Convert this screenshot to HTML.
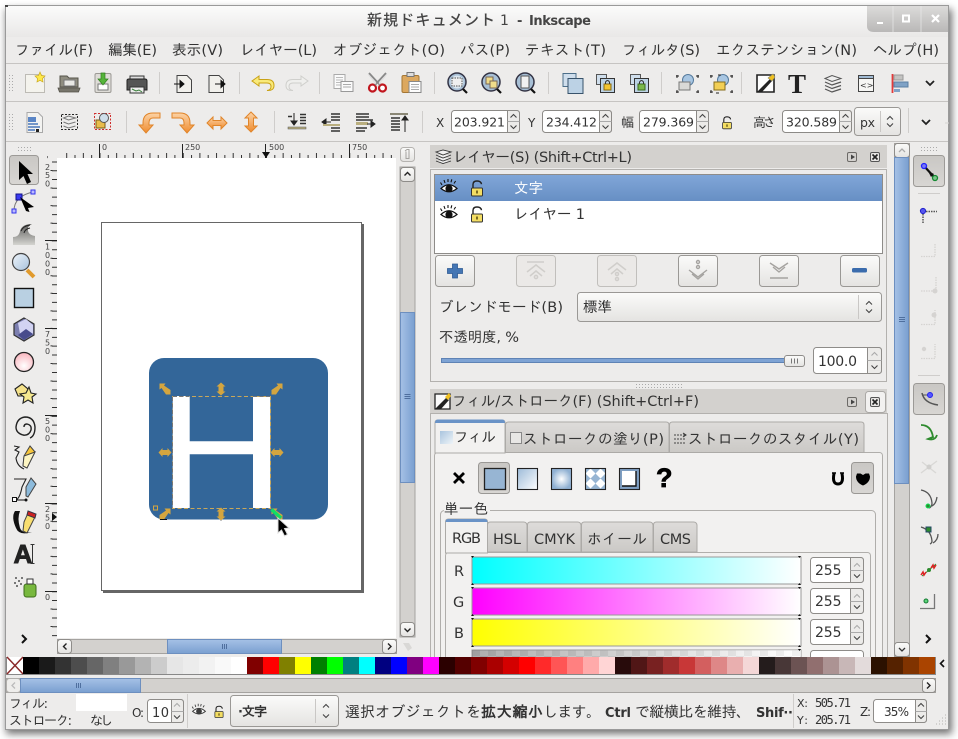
<!DOCTYPE html>
<html lang="ja"><head><meta charset="utf-8"><title>新規ドキュメント 1 - Inkscape</title>
<style>
html,body{margin:0;padding:0;background:#fff;width:958px;height:739px;overflow:hidden}
svg{display:block;position:absolute;left:0;top:0}
text{font-family:"DejaVu Sans","IPAGothic","Noto Sans CJK JP",sans-serif;font-size:14.5px;fill:#333}
.b{font-weight:700}
.s{font-size:8px;fill:#444;font-family:"DejaVu Sans",sans-serif}
.m{font-family:"DejaVu Sans Mono",monospace;font-size:12px}
</style></head><body>
<svg width="958" height="739" viewBox="0 0 958 739" xmlns="http://www.w3.org/2000/svg">
<defs>
<filter id="bl" x="-5%" y="-5%" width="110%" height="110%"><feGaussianBlur stdDeviation="4"/></filter>
<linearGradient id="title" x1="0" y1="0" x2="0" y2="1"><stop offset="0" stop-color="#fbfbfb"/><stop offset="1" stop-color="#e9e8e7"/></linearGradient>
<linearGradient id="ctl" x1="0" y1="0" x2="0" y2="1"><stop offset="0" stop-color="#dcdbda"/><stop offset="1" stop-color="#b9b8b7"/></linearGradient>
<linearGradient id="btn" x1="0" y1="0" x2="0" y2="1"><stop offset="0" stop-color="#fbfbfa"/><stop offset="1" stop-color="#e4e3e1"/></linearGradient>
<linearGradient id="tog" x1="0" y1="0" x2="0" y2="1"><stop offset="0" stop-color="#c9c7c4"/><stop offset="1" stop-color="#d8d6d3"/></linearGradient>
<linearGradient id="thv" x1="0" y1="0" x2="1" y2="0"><stop offset="0" stop-color="#a5c1e6"/><stop offset="1" stop-color="#7a9fd0"/></linearGradient>
<linearGradient id="thh" x1="0" y1="0" x2="0" y2="1"><stop offset="0" stop-color="#a5c1e6"/><stop offset="1" stop-color="#7a9fd0"/></linearGradient>
<linearGradient id="sel" x1="0" y1="0" x2="0" y2="1"><stop offset="0" stop-color="#80a6d8"/><stop offset="1" stop-color="#678fc4"/></linearGradient>
<linearGradient id="tab" x1="0" y1="0" x2="0" y2="1"><stop offset="0" stop-color="#dedcda"/><stop offset="1" stop-color="#cbc9c6"/></linearGradient>
<linearGradient id="rr" x1="0" y1="0" x2="1" y2="0"><stop offset="0" stop-color="#0ff"/><stop offset="1" stop-color="#fff"/></linearGradient>
<linearGradient id="gg" x1="0" y1="0" x2="1" y2="0"><stop offset="0" stop-color="#f0f"/><stop offset="1" stop-color="#fff"/></linearGradient>
<linearGradient id="yy" x1="0" y1="0" x2="1" y2="0"><stop offset="0" stop-color="#ff0"/><stop offset="1" stop-color="#fff"/></linearGradient>
<linearGradient id="aa" x1="0" y1="0" x2="1" y2="0"><stop offset="0" stop-color="#777"/><stop offset="1" stop-color="#fff"/></linearGradient>
<linearGradient id="blu" x1="0" y1="0" x2="1" y2="1"><stop offset="0" stop-color="#a9c4de"/><stop offset="1" stop-color="#eef4f8"/></linearGradient>
<linearGradient id="li" x1="0" y1="0" x2="1" y2="1"><stop offset="0" stop-color="#9dbbd8"/><stop offset="1" stop-color="#fff"/></linearGradient>
<radialGradient id="ra"><stop offset="0" stop-color="#fff"/><stop offset="1" stop-color="#8fb0d2"/></radialGradient>
<radialGradient id="pk" cx=".5" cy=".7" r=".7"><stop offset="0" stop-color="#fff"/><stop offset="1" stop-color="#f9b4bd"/></radialGradient>
<linearGradient id="ora" x1="0" y1="0" x2="0" y2="1"><stop offset="0" stop-color="#fcd3a6"/><stop offset="1" stop-color="#ef8c30"/></linearGradient>
<linearGradient id="lens" x1="0" y1="0" x2="1" y2="1"><stop offset="0" stop-color="#eef4fa"/><stop offset="1" stop-color="#a8c2dc"/></linearGradient>
<linearGradient id="tw" x1="0" y1="0" x2="0" y2="1"><stop offset="0" stop-color="#5c5c5a"/><stop offset="1" stop-color="#d4d4d0"/></linearGradient>
<g id="h"><polygon points="0,-6.500 4.500,-2.500 2.500,-2.500 2.500,2.500 4.500,2.500 0,6.500 -4.500,2.500 -2.500,2.500 -2.500,-2.500 -4.500,-2.500" fill="#d4a53f"/></g>
<g id="d"><polygon points="-5.500,-5.500 0.500,-5.500 -1,-3.500 5.500,1 5.500,5.500 1,5.500 -3.500,-1 -5.500,0.500" fill="#d4a53f"/></g>
<g id="eye"><path d="M-8 0.5Q0-7 8 0.5Q0 7-8 0.5Z" fill="#fff" stroke="#111" stroke-width="1.2"/><circle cy="0.5" r="3.6" fill="#111"/><path d="M-7-3l-1.5-2.5M-4-5l-1-3M-1-6V-9M2-5.7l.8-3M5-4.5l1.6-2.5" stroke="#111" stroke-width="1.1"/></g>
<g id="lock"><path d="M-4-2V-5.5Q-4-9 0-9Q4-9 4.5-5.8" fill="none" stroke="#222" stroke-width="1.4"/><rect x="-5.5" y="-2" width="11" height="8" rx="1" fill="#f3dd63" stroke="#333"/><rect x="-1" y="0.5" width="2" height="3" fill="#7a6a20"/></g>
<g id="upc"><path d="M-3 1.5L0-1.5 3 1.5" fill="none" stroke="#444" stroke-width="1.1"/></g>
<g id="dnc"><path d="M-3-1.5L0 1.5 3-1.5" fill="none" stroke="#444" stroke-width="1.1"/></g>
<g id="upf"><path d="M-3 1.5L0-1.5 3 1.5" fill="none" stroke="#aaa" stroke-width="1.1"/></g>
<pattern id="chk" width="16" height="16" patternUnits="userSpaceOnUse"><rect width="16" height="16" fill="#fff"/><rect width="8" height="8" fill="#0002"/><rect x="8" y="8" width="8" height="8" fill="#0002"/></pattern>
<pattern id="pat" x="585.500" y="468.500" width="10" height="10" patternUnits="userSpaceOnUse"><rect width="10" height="10" fill="#97b5d3"/><path d="M5 1L9 5 5 9 1 5Z" fill="#fff" stroke="#fff" stroke-width="1.500" stroke-linejoin="round"/></pattern>
<pattern id="dots" width="3" height="3" patternUnits="userSpaceOnUse"><rect width="1" height="1" fill="#aaa"/></pattern>
</defs>

<!-- window -->
<rect x="6" y="9" width="946" height="725" fill="#000" opacity=".55" filter="url(#bl)"/>
<rect x="5.5" y="5.5" width="943" height="724" fill="#edeceb" stroke="#9a9a9a"/>
<rect x="6" y="6" width="942" height="31" fill="url(#title)"/>
<rect x="5" y="5" width="3" height="2" fill="#444"/>
<path d="M867 6H948V32H874Q867 32 867 26Z" fill="url(#ctl)"/>
<path d="M893 6V32M921 6V32" stroke="#eaeaea" stroke-opacity=".7"/>
<rect x="877" y="22" width="6" height="2" fill="#fff"/>
<rect x="903" y="15.500" width="6" height="6" fill="none" stroke="#fff" stroke-width="2"/>
<path d="M932 15l7 7M939 15l-7 7" stroke="#fff" stroke-width="2.200"/>
<text x="367" y="25" style="fill:#444;font-family:'Noto Sans CJK JP',sans-serif;font-weight:500;font-size:15px" textLength="128">新規ドキュメント</text>
<text x="500" y="25" style="fill:#444;font-size:14px;font-weight:500" textLength="9">1</text>
<text x="517" y="25" class="b" style="fill:#444;font-size:13px">-</text>
<text x="529" y="25" class="b" style="fill:#444;font-size:13px" textLength="62">Inkscape</text>

<!-- menu -->
<g>
<text x="15" y="55" textLength="78">ファイル(F)</text>
<text x="108" y="55" textLength="49">編集(E)</text>
<text x="172" y="55" textLength="51">表示(V)</text>
<text x="240" y="55" textLength="77">レイヤー(L)</text>
<text x="333" y="55" textLength="112">オブジェクト(O)</text>
<text x="460" y="55" textLength="50">パス(P)</text>
<text x="525" y="55" textLength="81">テキスト(T)</text>
<text x="622" y="55" textLength="78">フィルタ(S)</text>
<text x="716" y="55" textLength="141">エクステンション(N)</text>
<text x="873" y="55" textLength="66">ヘルプ(H)</text>
</g>
<path d="M6 63.500H948M6 101.500H948M6 141.500H948" stroke="#c6c4c2"/>
<rect x="9" y="75" width="6" height="17" fill="url(#dots)"/>
<rect x="9" y="113" width="6" height="17" fill="url(#dots)"/>

<!-- toolbar seps -->
<path d="M159.500 72V94M239.500 72V94M319.500 72V94M434.500 72V94M548.500 72V94M661.500 72V94M741.500 72V94M126.500 111V133M274.500 111V133M422.500 111V133M908.500 108V133" stroke="#cfcdcb"/>

<!-- toolbar 1 icons -->
<path d="M25.500 74.500H41L44.500 78V92.500H25.500Z" fill="#f4f3ed" stroke="#bdbbb5"/>
<polygon points="40,72 41.500,75.500 45,76 42.500,78.500 43,82 40,80.300 37,82 37.500,78.500 35,76 38.500,75.500" fill="#ffe94a" stroke="#c9a91f" stroke-width=".7"/>

<path d="M60 76h7l2 2h9v9H60Z" fill="#8f8d80" stroke="#55534a"/><rect x="64" y="80" width="11" height="6" fill="#e8e8e4" stroke="#777"/><path d="M58 88h22l-1.500 4H59.500Z" fill="#77756b" stroke="#55534a" stroke-width=".8"/>

<rect x="95" y="73.500" width="16" height="19" rx="1.500" fill="#dedcd7" stroke="#9b9994"/><rect x="98" y="84" width="10" height="6" fill="#fff" stroke="#777"/><path d="M101 73h4v6h3l-5 6-5-6h3Z" fill="#55b43a" stroke="#2f7f1e" stroke-width=".7"/>

<path d="M130 76h14v5h-14Z" fill="#ddd" stroke="#333"/><path d="M127 80.500Q127 79 129 79H145Q147 79 147 81V90H127Z" fill="#555" stroke="#222"/><rect x="130" y="87" width="14" height="6" fill="#eee" stroke="#333"/><path d="M132 89l4 2 3-1 3 2" stroke="#3a7f3a" fill="none"/>

<path d="M177 75.500H187L191.500 80V92.500H177Z" fill="#f1f0ec" stroke="#444"/><path d="M174 84H183M180 80.500L184 84 180 87.500Z" stroke="#111" fill="#111"/>
<path d="M209 75.500H219L223.500 80V92.500H209Z" fill="#f1f0ec" stroke="#444"/><path d="M215 84H224M221 80.500L225 84 221 87.500Z" stroke="#111" fill="#111"/>

<path d="M259 76L252 81 259 86V83H267Q271 83 271 86.500Q271 90 267 90.500Q274 91 274 85.500Q274 79.500 267 79.500H259Z" fill="#f9ea7a" stroke="#c9a216"/>
<path d="M301 76L308 81 301 86V83H293Q289 83 289 86.500Q289 90 293 90.500Q286 91 286 85.500Q286 79.500 293 79.500H301Z" fill="#efefed" stroke="#cfcfcc"/>

<rect x="334" y="74.500" width="11" height="14" fill="#fafafa" stroke="#aaa"/><path d="M336 77.500h7M336 80h7M336 82.500h7M336 85h7" stroke="#bbb"/><rect x="341" y="81.500" width="12" height="10" fill="#fafafa" stroke="#999"/><path d="M343 84.500h8M343 87h8" stroke="#aaa"/>

<circle cx="372.500" cy="88" r="3.500" fill="#fff" stroke="#c1161e" stroke-width="2.200"/><circle cx="382.500" cy="88" r="3.500" fill="#fff" stroke="#c1161e" stroke-width="2.200"/><path d="M375 85L386 73M380 85L369 73" stroke="#888" stroke-width="1.800"/><path d="M376 84L368 74M379 84L387 74" stroke="#ddd"/>

<rect x="402" y="75.500" width="17" height="17" rx="1.500" fill="#dca85f" stroke="#a47633"/><rect x="407" y="72.500" width="7" height="4" fill="#ddd" stroke="#777"/><rect x="409" y="81.500" width="12" height="11" fill="#fdfdfd" stroke="#888"/><path d="M411 84.500h8M411 87h8M411 89.500h8" stroke="#aaa"/>

<circle cx="457" cy="82" r="9" fill="#a8c0d6" stroke="#334" stroke-width="1.500"/><circle cx="457" cy="82" r="6.500" fill="#dde7ef"/><path d="M463 89l4 4" stroke="#111" stroke-width="2.200"/><rect x="452" y="78" width="10" height="8" fill="#f0f0f0" stroke="#555" stroke-dasharray="1.500 1"/>
<circle cx="491" cy="82" r="9" fill="#a8c0d6" stroke="#334" stroke-width="1.500"/><path d="M497 89l4 4" stroke="#111" stroke-width="2.200"/><rect x="486" y="77" width="7" height="7" fill="#f0dc8a" stroke="#765"/><rect x="490" y="81" width="7" height="7" fill="#f0dc8a" stroke="#765"/>
<circle cx="525" cy="82" r="9" fill="#a8c0d6" stroke="#334" stroke-width="1.500"/><path d="M531 89l4 4" stroke="#111" stroke-width="2.200"/><rect x="521" y="76" width="8" height="12" fill="#f1f1f1" stroke="#555"/>

<rect x="563" y="73.500" width="13" height="13" fill="#cfdeec" stroke="#4d6f8a"/><rect x="568" y="78.500" width="15" height="15" fill="#bcd2e5" stroke="#38536b"/>
<rect x="596.500" y="74.500" width="10" height="10" fill="#cfdeec" stroke="#555"/><rect x="600.500" y="78.500" width="14" height="14" fill="#bcd2e5" stroke="#333"/><rect x="604" y="84" width="7" height="6" fill="#f3c531" stroke="#8a6a10"/><path d="M605.500 84v-2q2-3 4 0v2" fill="none" stroke="#333"/>
<rect x="630.500" y="74.500" width="10" height="10" fill="#cfdeec" stroke="#555"/><rect x="634.500" y="78.500" width="14" height="14" fill="#bcd2e5" stroke="#333"/><rect x="638" y="84" width="7" height="6" fill="#7cb84c" stroke="#3a6b1c"/><path d="M639.500 84v-2q2-3 4 0v2" fill="none" stroke="#333"/>

<circle cx="688" cy="80" r="5.500" fill="#a8c6e2" stroke="#557a9c"/><rect x="679" y="82" width="11" height="8" fill="#d9d9d6" stroke="#777"/><path d="M676 76h3M696 76h3M676 92h3M696 92h3M677 75v3M698 75v3M677 90v3M698 90v3" stroke="#222"/>
<circle cx="723" cy="80" r="5.500" fill="#a8c6e2" stroke="#557a9c"/><rect x="714" y="82" width="11" height="8" fill="#f2cf55" stroke="#866d1a"/><path d="M710 76h3M730 76h3M710 92h3M730 92h3M711 75v3M732 75v3M711 90v3M732 90v3M718 75h3M716 93h3" stroke="#222"/>

<path d="M757 75h17v17h-17Z" fill="#fdfdfd" stroke="#222" stroke-width="1.600"/><path d="M757 92L770 79 772 81 762 92Z" fill="#222"/><path d="M768 78l5-4 2 3-3 4Z" fill="#f0c020" stroke="#886" stroke-width=".6"/>
<text x="788" y="93" style="font-family:'Liberation Serif',serif;font-size:27px;font-weight:700;fill:#222" textLength="22">T</text>
<path d="M825 78.500L832 75.500 841 78.500 832 81.500Z" fill="#eee" stroke="#555"/><path d="M825 82l7 3 9-3M825 85.500l7 3 9-3M825 89l7 3 9-3" fill="none" stroke="#555" stroke-width="1.200"/>
<rect x="858.500" y="75.500" width="15" height="16" fill="#f6f6f4" stroke="#444"/><rect x="858.500" y="75.500" width="15" height="3" fill="#9fb9d2" stroke="#444"/><text x="860" y="88" style="font-size:8px;fill:#333">&lt;&gt;</text>
<path d="M892.500 74V93" stroke="#e23b3b" stroke-width="1.800"/><rect x="894" y="75" width="9" height="5" fill="#c3c3c1" stroke="#999"/><rect x="894" y="82" width="14" height="5" fill="#7fa2c6" stroke="#5a7fa3"/><rect x="894" y="89" width="6" height="3" fill="#7fa2c6"/>
<path d="M926 81l4 4 4-4" fill="none" stroke="#222" stroke-width="1.800"/>

<!-- toolbar 2 icons -->
<path d="M27 112.500H38L42.500 117V132.500H27Z" fill="#f3f3f1" stroke="#a9a9a9"/><rect x="28" y="117" width="8" height="5" fill="#5b86c6"/><path d="M28 124h10M28 127h12M28 130h7" stroke="#4b77bb" stroke-width="1.500"/><path d="M36 129h3v3h-3" fill="#222"/>
<rect x="61.500" y="114.500" width="16" height="15" fill="none" stroke="#222" stroke-dasharray="2 1.500"/><path d="M63.500 118l5-2 7 2-7 2ZM63.500 122l5 2 7-2M63.500 126l5 2 7-2" fill="#eee" stroke="#777"/>
<rect x="94.500" y="113.500" width="16" height="16" fill="none" stroke="#cf2b2b" stroke-dasharray="2 1.500"/><rect x="96" y="120" width="9" height="8" fill="#e8bc4b" stroke="#7a5d14"/><circle cx="104" cy="118" r="4.500" fill="#cfdfeb" stroke="#555"/>

<path d="M160 113H153Q143 113 143 123V125H139L146 133 153 125H149V123Q149 118 153 118H160Z" fill="url(#ora)" stroke="#e0852a"/>
<path d="M172 113H180Q190 113 190 123V125H194L187 133 180 125H184V123Q184 118 180 118H172Z" fill="url(#ora)" stroke="#e0852a"/>
<polygon points="207,123 213,117 213,120.500 221,120.500 221,117 227,123 221,129 221,125.500 213,125.500 213,129" fill="url(#ora)" stroke="#e0852a"/>
<polygon points="251,112 257,118 253.500,118 253.500,126 257,126 251,132 245,126 248.500,126 248.500,118 245,118" fill="url(#ora)" stroke="#e0852a"/>

<path d="M288 116.500H292M300 114.500H306M300 117.500H306M300 120.500H306M300 123.500H306" stroke="#333" stroke-width="1.500"/><path d="M294 113V124M291 121L294 125 297 121Z" stroke="#222" fill="#222"/><rect x="288" y="127" width="18" height="2" fill="#b9ae7e" stroke="#555" stroke-width=".5"/>
<path d="M331 114h9M331 117h9M331 120h9M331 128h9M331 131h9" stroke="#333" stroke-width="1.500"/><path d="M323 122h8M326 119l-4 3 4 3Z" fill="#222" stroke="#222"/><rect x="323" y="124" width="17" height="2" fill="#b9ae7e"/>
<path d="M356 114h13M356 117h13M356 120h17M356 128h11M356 131h9" stroke="#333" stroke-width="1.500"/><rect x="356" y="122" width="12" height="3" fill="#b9ae7e"/><path d="M367 124h7M371 121l4 3-4 3Z" fill="#222" stroke="#222"/>
<rect x="390" y="113" width="18" height="2" fill="#8b8876"/><path d="M391 118h9M391 121h9M391 124h9M391 127h9M391 130h9" stroke="#333" stroke-width="1.500"/><path d="M405 132V118M402 120l3-4 3 4Z" fill="#222" stroke="#222"/>

<!-- toolbar 2 spins -->
<text x="436" y="127" style="font-size:12px" textLength="9">X</text>
<text x="528" y="127" style="font-size:12px" textLength="9">Y</text>
<text x="621" y="127" style="font-size:13px" textLength="13">幅</text>
<text x="753" y="127" style="font-size:13px" textLength="23">高さ</text>
<use href="#lock" transform="translate(727,124) scale(.8)"/>
<g fill="#fff" stroke="#8c8a87">
<rect x="451.500" y="110.500" width="68" height="22" rx="3"/><rect x="542.500" y="110.500" width="69" height="22" rx="3"/><rect x="639.500" y="110.500" width="69" height="22" rx="3"/><rect x="782.500" y="110.500" width="69" height="22" rx="3"/>
</g>
<g fill="#ecebe9" stroke="#8c8a87">
<path d="M507.500 110.500h9q3 0 3 3v16q0 3-3 3h-9Z"/><path d="M599.500 110.500h9q3 0 3 3v16q0 3-3 3h-9Z"/><path d="M696.500 110.500h9q3 0 3 3v16q0 3-3 3h-9Z"/><path d="M839.500 110.500h9q3 0 3 3v16q0 3-3 3h-9Z"/>
</g>
<path d="M507.500 121.500h12M599.500 121.500h12M696.500 121.500h12M839.500 121.500h12" stroke="#aaa"/>
<use href="#upc" x="513.500" y="116"/><use href="#dnc" x="513.500" y="127"/><use href="#upc" x="605.500" y="116"/><use href="#dnc" x="605.500" y="127"/><use href="#upc" x="702.500" y="116"/><use href="#dnc" x="702.500" y="127"/><use href="#upc" x="845.500" y="116"/><use href="#dnc" x="845.500" y="127"/>
<text x="454" y="126.500" textLength="51" style="font-size:12.500px">203.921</text>
<text x="546" y="126.500" textLength="51" style="font-size:12.500px">234.412</text>
<text x="643" y="126.500" textLength="51" style="font-size:12.500px">279.369</text>
<text x="786" y="126.500" textLength="51" style="font-size:12.500px">320.589</text>
<rect x="854.500" y="107.500" width="46" height="28" rx="3" fill="url(#btn)" stroke="#9a9895"/>
<text x="860" y="127" style="font-size:12.500px" textLength="15">px</text><path d="M880.500 111V132" stroke="#c9c7c5"/>
<use href="#upc" x="890" y="118"/><use href="#dnc" x="890" y="125"/>
<path d="M922 120l4 4 4-4" fill="none" stroke="#222" stroke-width="1.800"/>
<path d="M945 123h4" stroke="#d5d3d1"/>

<!-- left toolbox -->
<rect x="17" y="145" width="16" height="6" fill="url(#dots)"/>
<rect x="9.500" y="155.500" width="29" height="29" rx="3" fill="url(#tog)" stroke="#9c9a97"/>
<path d="M19 161V180L23.500 176 27 184 31 182 27.500 174 33 174Z" fill="#000"/>
<path d="M14 211Q14 196 33 192" fill="none" stroke="#777"/>
<rect x="16" y="194" width="6" height="6" fill="#3a3af0" stroke="#118"/><rect x="31" y="190" width="4" height="4" fill="#bcbcff" stroke="#33e"/><rect x="12" y="209" width="4" height="4" fill="#bcbcff" stroke="#33e"/>
<path d="M20 197L34 207 28 208 29.500 212 26 211Z" fill="#000"/>
<path d="M13 245V237Q19 237 20 231Q22 224 32 224Q27 226 28 231Q29 235 35 236V245Z" fill="url(#tw)"/><path d="M21 231Q23 226 30 225M24 233Q25 229 30 228" stroke="#222" fill="none"/>
<path d="M27 270L34 277" stroke="#e19a2d" stroke-width="4"/><circle cx="21" cy="262" r="8.500" fill="url(#lens)" stroke="#444" stroke-width="1.200"/>
<rect x="14.500" y="288.500" width="19" height="19" fill="#b9d0e2" stroke="#111" stroke-width="1.400"/>
<polygon points="24,318 34,324 34,335 24,341 14,335 14,324" fill="#7c7fb0" stroke="#333" stroke-width="1.200"/><polygon points="18,323 26,319 33,325 33,334 20,334" fill="#d2d3f2"/><polygon points="18,335 26,329 33,334 24,340" fill="#484c8c"/>
<circle cx="24" cy="362" r="9.500" fill="url(#pk)" stroke="#222" stroke-width="1.300"/>
<polygon points="15,389 22,384 28,389 26,396 18,396" fill="#f5e28a" stroke="#222" stroke-width="1.100"/><polygon points="29,387 31,393 36,394 32,397 33,403 28,400 23,403 24,397 20,394 26,393" fill="#f5e88f" stroke="#222" stroke-width="1.100"/>
<path d="M24 427Q24 424 27 424Q32 425 31 430Q29 436 23 435Q16 433 16 427Q17 418 25 417Q34 417 35 427Q35 436 30 438" fill="none" stroke="#222" stroke-width="1.400"/>

<path d="M14 446l5 1-4 3 4 2-3 6Q17 466 24 469" fill="none" stroke="#222" stroke-width="1.100"/><polygon points="30,446 35,452 27,468 23,466 24,456" fill="#f8c63a" stroke="#444"/><polygon points="24,456 35,452 27,468 23,466" fill="#fdf5c2" stroke="#444"/>
<path d="M14 479H26L22 487Q20 498 16 500" fill="none" stroke="#222" stroke-width="1.100"/><rect x="12.500" y="497.500" width="4" height="4" fill="#fff" stroke="#111"/><path d="M17 500H25" stroke="#111"/><circle cx="26" cy="500" r="1.500" fill="#111"/><polygon points="31,478 36,484 28,497 26,496 26,487" fill="#8dbbdc" stroke="#444"/>
<path d="M15 511Q11 517 16 528Q19 536 32 532Q22 534 20 528Q17 518 20 511Z" fill="#111"/><polygon points="28,513 35,517 27,533 23,531 24,522" fill="#f8de70" stroke="#444"/><path d="M28 511L36 514 35 518 27 515Z" fill="#c22" stroke="#334"/>
<text x="13.500" y="563" style="font-size:26px;font-weight:700;fill:#222;stroke:#222;stroke-width:.9px;font-family:'Liberation Sans',sans-serif" textLength="18">A</text>
<path d="M32.500 544.500v19M30.500 544.500h4M30.500 563.500h4" stroke="#333"/>
<path d="M15 578h2M18 581h2M14 583h2M16 586h2M21 578h2M20 584h2" stroke="#333" stroke-width="1.300"/><rect x="24" y="584" width="12" height="13" rx="2.500" fill="#78b83e" stroke="#3c6d1a"/><rect x="27" y="579" width="6" height="5" fill="#fff" stroke="#333"/>
<path d="M22 635l4 4-4 4" fill="none" stroke="#111" stroke-width="2"/>

<!-- rulers -->
<line x1="66.200" y1="155.500" x2="396" y2="155.500" stroke="#333" stroke-width="5" stroke-dasharray="1 15.650"/>
<line x1="74.500" y1="156.500" x2="396" y2="156.500" stroke="#333" stroke-width="3" stroke-dasharray="1 15.650"/>
<path d="M99.500 144V158M182.500 144V158M265.500 144V158M349.500 144V158" stroke="#222"/>
<text class="s" x="102" y="150">0</text><text class="s" x="185" y="150">250</text><text class="s" x="269" y="150">500</text><text class="s" x="352" y="150">750</text>
<polygon points="262,152 270,152 266,158" fill="#111"/>
<line x1="54.500" y1="161.500" x2="54.500" y2="638" stroke="#333" stroke-width="5" stroke-dasharray="1 7.770"/>
<line x1="51.500" y1="170" x2="51.500" y2="638" stroke="#333" stroke-width="2" stroke-dasharray="1 16.540"/>
<path d="M45 240.500H57M45 328.500H57M45 415.500H57M45 503.500H57M45 591.500H57" stroke="#222"/>
<g><text class="s" x="47.500" y="162" text-anchor="middle">'</text><text class="s" x="47.500" y="170" text-anchor="middle">2</text><text class="s" x="47.500" y="178" text-anchor="middle">5</text><text class="s" x="47.500" y="186.500" text-anchor="middle">0</text>
<text class="s" x="47.500" y="249.500" text-anchor="middle">1</text><text class="s" x="47.500" y="258" text-anchor="middle">0</text><text class="s" x="47.500" y="266.500" text-anchor="middle">0</text><text class="s" x="47.500" y="275" text-anchor="middle">0</text>
<text class="s" x="47.500" y="337" text-anchor="middle">7</text><text class="s" x="47.500" y="345.500" text-anchor="middle">5</text><text class="s" x="47.500" y="354" text-anchor="middle">0</text>
<text class="s" x="47.500" y="424" text-anchor="middle">5</text><text class="s" x="47.500" y="432.500" text-anchor="middle">0</text><text class="s" x="47.500" y="441" text-anchor="middle">0</text>
<text class="s" x="47.500" y="512" text-anchor="middle">2</text><text class="s" x="47.500" y="520.500" text-anchor="middle">5</text><text class="s" x="47.500" y="529" text-anchor="middle">0</text>
<text class="s" x="47.500" y="600" text-anchor="middle">0</text></g>

<!-- canvas -->
<rect x="57" y="158" width="339" height="480" fill="#fff"/>
<polygon points="52,513 57,517 52,521" fill="#111"/>
<rect x="361" y="224" width="3" height="369" fill="#666"/><rect x="103" y="590" width="261" height="3" fill="#666"/>
<rect x="101.500" y="222.500" width="260" height="368" fill="#fff" stroke="#666"/>
<rect x="149" y="358" width="179" height="161.500" rx="15" fill="#336699"/>
<path d="M172.700 396H189.700V441.300H253V396H270.300V508H253V454.300H189.700V508H172.700Z" fill="#fff"/>
<rect x="172.500" y="396.500" width="98" height="112" fill="none" stroke="#c8a75a" stroke-dasharray="4 2.500"/>
<path d="M172.500 397V508M173 396.500H189M253 396.500H270" stroke="#777" stroke-dasharray="4 2.500" fill="none"/>
<use href="#d" x="165" y="389"/><use href="#h" x="221" y="389"/><use href="#d" transform="translate(277,389) scale(-1,1)"/>
<use href="#h" transform="translate(165,452.500) rotate(90)"/><use href="#h" transform="translate(277,452.500) rotate(90)"/>
<use href="#d" transform="translate(165,514) scale(-1,1)"/><use href="#h" x="221" y="514"/><use href="#d" x="277" y="514"/>
<path d="M271.500 509.500L281 518" stroke="#11dd66" stroke-width="3.500"/>
<rect x="153.500" y="506" width="4" height="4" fill="none" stroke="#d4a53f"/>
<path d="M160 519.500h7M221 520v.5" stroke="#111"/>
<path d="M278 518V533L281.500 530 284.500 536 287.500 534.500 284.500 528.500 289 528Z" fill="#000" stroke="#ddd"/>

<!-- canvas scrollbars -->
<rect x="400.500" y="147.500" width="14" height="14" rx="3" fill="url(#btn)" stroke="#b5b3b0"/><path d="M405 151l2-1.500h2v9h-3v-7" fill="none" stroke="#a5a3a0"/>
<rect x="400" y="167" width="15" height="470" fill="#d3d1ce" stroke="#a5a3a0"/>
<rect x="400.500" y="167.500" width="14" height="14" rx="3" fill="url(#btn)" stroke="#8e8c89"/><path d="M404.500 175.500L407.500 172.500 410.500 175.500" fill="none" stroke="#222" stroke-width="1.400"/>
<rect x="400.500" y="312.500" width="14" height="170" fill="url(#thv)" stroke="#6d8fbf"/><path d="M404.500 394.500h6M404.500 396.500h6M404.500 398.500h6" stroke="#4f6f9e"/>
<rect x="400.500" y="622.500" width="14" height="14" rx="3" fill="url(#btn)" stroke="#8e8c89"/><path d="M404.500 628.500L407.500 631.500 410.500 628.500" fill="none" stroke="#222" stroke-width="1.400"/>
<rect x="57.500" y="639.500" width="339" height="14" fill="#d3d1ce" stroke="#a5a3a0"/>
<rect x="57.500" y="639.500" width="14" height="14" rx="3" fill="url(#btn)" stroke="#8e8c89"/><path d="M66.500 643.500L63.500 646.500 66.500 649.500" fill="none" stroke="#222" stroke-width="1.400"/>
<rect x="167.500" y="639.500" width="114" height="14" fill="url(#thh)" stroke="#6d8fbf"/><path d="M222.500 644v5M224.500 644v5M226.500 644v5" stroke="#4f6f9e"/>
<rect x="382.500" y="639.500" width="14" height="14" rx="3" fill="url(#btn)" stroke="#8e8c89"/><path d="M388 643.500L391 646.500 388 649.500" fill="none" stroke="#222" stroke-width="1.400"/>
<path d="M403 643l6 0 3 5-4 3Z" fill="#d9d8d6"/>

<!-- layers panel -->
<rect x="430" y="145" width="457" height="23" fill="#d3d1ce"/>
<path d="M436 152l7-2 8 2-8 3ZM436 155l7 3 8-3M436 158l7 3 8-3M436 161l7 2.500 8-2.500" fill="#f1f1f1" stroke="#333" stroke-width=".9"/>
<text x="453" y="162" textLength="179">レイヤー(S) (Shift+Ctrl+L)</text>
<rect x="847.500" y="152.500" width="9" height="9" rx="1.500" fill="none" stroke="#6c6a67"/><polygon points="851,154.500 855,157 851,159.500" fill="#444"/>
<rect x="870.500" y="152.500" width="9" height="9" rx="1.500" fill="#e8e6e4" stroke="#555"/><path d="M872.500 154.500l5 5M877.500 154.500l-5 5" stroke="#222" stroke-width="1.600"/>
<rect x="430.500" y="169.500" width="456" height="212" fill="#edeceb" stroke="#b3b1ae"/>
<rect x="434.500" y="174.500" width="448" height="79" fill="#fff" stroke="#8e8c89"/>
<rect x="435" y="175" width="447" height="26" fill="url(#sel)"/>
<use href="#eye" x="449" y="188"/><use href="#lock" x="477" y="190"/>
<use href="#eye" x="449" y="214"/><use href="#lock" x="477" y="216"/>
<text x="514" y="193" style="fill:#fff" textLength="29">文字</text>
<text x="514" y="219" textLength="71">レイヤー 1</text>
<g fill="url(#btn)" stroke="#9a9895">
<rect x="435.500" y="255.500" width="39" height="31" rx="3"/><rect x="678.500" y="255.500" width="39" height="31" rx="3"/><rect x="759.500" y="255.500" width="39" height="31" rx="3"/><rect x="840.500" y="255.500" width="39" height="31" rx="3"/>
</g>
<g fill="#ebe9e7" stroke="#c1bfbc"><rect x="516.500" y="255.500" width="39" height="31" rx="3"/><rect x="597.500" y="255.500" width="39" height="31" rx="3"/></g>
<path d="M452.500 264h5v4.500h5v5h-5V278h-5v-4.500h-5v-5h5Z" fill="#4476b4" stroke="#2d5a94" stroke-width=".8"/>
<rect x="852" y="268" width="15" height="4.500" rx="1.500" fill="#3b6cad"/>
<g fill="none" stroke="#d0cecb" stroke-width="1.500"><path d="M527 262h17M527 272l9-7 9 7M530 276l6-5 6 5"/><circle cx="536" cy="277" r="1.600"/><path d="M608 270l9-7 9 7M611 274l6-5 6 5"/><circle cx="617" cy="274" r="1.500"/><circle cx="617" cy="279" r="1.500"/></g>
<g fill="none" stroke="#a5a3a0" stroke-width="1.400"><circle cx="698" cy="262" r="1.500"/><circle cx="698" cy="267" r="1.500"/><path d="M689 270l9 7 9-7M692 274l6 5 6-5"/><path d="M770 263l9 6 9-6M773 267l6 5 6-5M770 278h18"/></g>
<text x="439" y="312" textLength="124">ブレンドモード(B)</text>
<rect x="577.500" y="292.500" width="304" height="29" rx="3" fill="url(#btn)" stroke="#9a9895"/>
<path d="M858.500 295V319" stroke="#c9c7c5"/><use href="#upc" x="869" y="303"/><use href="#dnc" x="869" y="311"/>
<text x="583" y="312" textLength="29">標準</text>
<text x="439" y="342" textLength="80">不透明度, %</text>
<rect x="441.500" y="358.500" width="344" height="4" fill="#7ea3d4" stroke="#5f83b5"/>
<rect x="784.500" y="355.500" width="20" height="11" rx="2.500" fill="url(#btn)" stroke="#8e8c89"/><path d="M791.500 358.500v5M794.500 358.500v5M797.500 358.500v5" stroke="#777"/>
<rect x="813.500" y="347.500" width="68" height="26" rx="3" fill="#fff" stroke="#8e8c89"/><path d="M867.500 347.500h11q3 0 3 3v20q0 3-3 3h-11Z" fill="#ecebe9" stroke="#8e8c89"/><path d="M867.500 360.500h14" stroke="#aaa"/>
<use href="#upf" x="874.500" y="354"/><use href="#dnc" x="874.500" y="367"/>
<text x="818" y="366" textLength="39" style="font-size:14px">100.0</text>
<rect x="635" y="383" width="47" height="5" fill="url(#dots)"/>

<!-- fill stroke panel -->
<rect x="430" y="389" width="457" height="24" fill="#d3d1ce"/>
<path d="M435 394h15v15h-15Z" fill="#fafafa" stroke="#222" stroke-width="1.300"/><path d="M435 409L446 398 449 400 441 409Z" fill="#222"/><path d="M445 397l4-4 2 3-3 4Z" fill="#f0c020"/>
<text x="452" y="406" textLength="247">フィル/ストローク(F) (Shift+Ctrl+F)</text>
<rect x="847.500" y="397.500" width="9" height="9" rx="1.500" fill="none" stroke="#6c6a67"/><polygon points="851,399.500 855,402 851,404.500" fill="#444"/>
<rect x="865.500" y="391.500" width="20" height="21" rx="3" fill="#f2f1f0" stroke="#aaa8a5"/><rect x="870.500" y="397.500" width="9" height="9" rx="1.500" fill="#e8e6e4" stroke="#555"/><path d="M872.500 399.500l5 5M877.500 399.500l-5 5" stroke="#222" stroke-width="1.600"/>
<rect x="430.500" y="413.500" width="457" height="244" fill="#edeceb" stroke="#b3b1ae"/>
<rect x="434.500" y="452.500" width="448" height="210" rx="3" fill="#f2f1f0" stroke="#b0aeab"/>
<path d="M505.500 452.500V425q0-3 3-3H666q3 0 3 3V452.500ZM669.500 452.500V425q0-3 3-3H861q3 0 3 3V452.500Z" fill="url(#tab)" stroke="#acaaa7"/>
<path d="M435 453V423q0-3 3-3h64q3 0 3 3V453Z" fill="#f2f1f0" stroke="#acaaa7"/><path d="M435 423q0-3.500 3-3.500h64q3 0 3 3.500Z" fill="#6a93c7"/>
<rect x="440" y="431" width="13" height="13" fill="url(#blu)"/>
<text x="454" y="442" textLength="42">フィル</text>
<rect x="510.500" y="432.500" width="11" height="11" fill="#e8e7e5" stroke="#888"/>
<text x="523" y="444" textLength="141">ストロークの塗り(P)</text>
<path d="M674 435h12M674 439h12M674 443h12" stroke="#444" stroke-dasharray="2 1"/><path d="M683 433l3 2-3 2" fill="none" stroke="#333"/>
<text x="688" y="444" textLength="171">ストロークのスタイル(Y)</text>
<path d="M454 473l10 10M464 473l-10 10" stroke="#000" stroke-width="2.800"/>
<rect x="478.500" y="462.500" width="31" height="31" rx="3" fill="url(#tog)" stroke="#9a9895"/>
<rect x="484.500" y="468.500" width="21" height="21" fill="#97b5d3" stroke="#222" stroke-width="1.300"/>
<rect x="517.500" y="468.500" width="20" height="21" fill="url(#li)" stroke="#222" stroke-width="1.100"/>
<rect x="551.500" y="468.500" width="20" height="21" fill="url(#ra)" stroke="#222" stroke-width="1.100"/>
<rect x="585.500" y="468.500" width="20" height="21" fill="url(#pat)" stroke="#222" stroke-width="1.100"/>
<rect x="619.500" y="468.500" width="20" height="21" fill="#7f9fc2" stroke="#222" stroke-width="1.100"/><rect x="622" y="471" width="14" height="15" fill="#fff"/><path d="M636 471v15h-14" fill="none" stroke="#111" stroke-width="1.400"/>
<text x="656" y="487" style="font-family:'Liberation Sans',sans-serif;font-weight:700;font-size:27px;fill:#000;stroke:#000;stroke-width:.8px" textLength="16">?</text>
<path d="M834 473.500Q832 484 838 484T842 473.500" fill="none" stroke="#000" stroke-width="3"/><path d="M832 473h4M840 473h4" stroke="#000" stroke-width="1.500"/>
<rect x="851.500" y="462.500" width="22" height="31" rx="3" fill="url(#tog)" stroke="#9a9895"/>
<path d="M857 473.500h3.500l2.500 1.500 2.500-1.500h3.500l1 3q0 6-7 9-7-3-7-9Z" fill="#000"/>
<rect x="440.500" y="510.500" width="435" height="155" rx="4" fill="none" stroke="#b0aeab"/>
<rect x="444" y="505" width="46" height="8" fill="#f2f1f0"/>
<text x="444" y="514" textLength="44">単一色</text>
<rect x="445.500" y="552.500" width="425" height="110" rx="3" fill="#f2f1f0" stroke="#b0aeab"/>
<path d="M487.500 552V525q0-3 3-3h33q3 0 3.500 3V552ZM527.500 552V525q0-3 3-3h47q3 0 3.500 3V552ZM581.500 552V525q0-3 3-3h65q3 0 3.500 3V552ZM653.500 552V525q0-3 3-3h37q3 0 3.500 3V552Z" fill="url(#tab)" stroke="#acaaa7"/>
<path d="M445.500 553V522q0-3 3-3h36q3 0 3 3V553Z" fill="#f2f1f0" stroke="#acaaa7"/><path d="M445.500 522q0-3 3-3h36q3 0 3 3Z" fill="#6a93c7"/>
<text x="452" y="543" textLength="29">RGB</text>
<text x="493" y="544" textLength="28">HSL</text>
<text x="534" y="544" textLength="41">CMYK</text>
<text x="587" y="544" textLength="60">ホイール</text>
<text x="660" y="544" textLength="31">CMS</text>
<text x="454" y="576" textLength="10">R</text><text x="453" y="607" textLength="11">G</text><text x="454" y="638" textLength="10">B</text>
<rect x="472" y="557" width="329" height="27" fill="url(#rr)" stroke="#999"/>
<rect x="472" y="588" width="329" height="27" fill="url(#gg)" stroke="#999"/>
<rect x="472" y="619" width="329" height="27" fill="url(#yy)" stroke="#999"/>
<rect x="472" y="650" width="329" height="16" fill="url(#chk)" stroke="#999"/>
<rect x="472" y="650" width="329" height="16" fill="url(#aa)" opacity=".6"/>
<path d="M471 556l3 0-1.500 2ZM801 556l-3 0 1.500 2ZM471 585l3 0-1.500-2ZM801 585l-3 0 1.500-2ZM471 587l3 0-1.500 2ZM801 587l-3 0 1.500 2ZM471 616l3 0-1.500-2ZM801 616l-3 0 1.500-2ZM471 618l3 0-1.500 2ZM801 618l-3 0 1.500 2ZM471 647l3 0-1.500-2ZM801 647l-3 0 1.500-2ZM801 649l-3 0 1.500 2Z" fill="#111"/>
<g fill="#fff" stroke="#8e8c89"><rect x="810.500" y="557.500" width="53" height="25" rx="3"/><rect x="810.500" y="588.500" width="53" height="25" rx="3"/><rect x="810.500" y="619.500" width="53" height="25" rx="3"/><rect x="810.500" y="650.500" width="53" height="25" rx="3"/></g>
<g fill="#ecebe9" stroke="#8e8c89"><path d="M850.500 557.500h10q3 0 3 3v19q0 3-3 3h-10Z"/><path d="M850.500 588.500h10q3 0 3 3v19q0 3-3 3h-10Z"/><path d="M850.500 619.500h10q3 0 3 3v19q0 3-3 3h-10Z"/></g>
<path d="M850.500 570.500h13M850.500 601.500h13M850.500 632.500h13" stroke="#aaa"/>
<use href="#upf" x="857" y="565"/><use href="#dnc" x="857" y="576"/><use href="#upf" x="857" y="596"/><use href="#dnc" x="857" y="607"/><use href="#upf" x="857" y="627"/><use href="#dnc" x="857" y="638"/>
<text x="815" y="575" textLength="26.500" style="font-size:14px">255</text><text x="815" y="606" textLength="26.500" style="font-size:14px">255</text><text x="815" y="637" textLength="26.500" style="font-size:14px">255</text>

<!-- panel scrollbar -->
<rect x="894.500" y="143.500" width="15" height="513" fill="#d3d1ce" stroke="#a5a3a0"/>
<rect x="894.500" y="143.500" width="15" height="14" rx="3" fill="url(#btn)" stroke="#8e8c89"/><path d="M899 152L902 149 905 152" fill="none" stroke="#aaa" stroke-width="1.300"/>
<rect x="894.500" y="157.500" width="14" height="326" fill="url(#thv)" stroke="#6d8fbf"/><path d="M899 317.500h6M899 319.500h6M899 321.500h6" stroke="#4f6f9e"/>
<rect x="894.500" y="642.500" width="15" height="14" rx="3" fill="url(#btn)" stroke="#8e8c89"/><path d="M899 648L902 651 905 648" fill="none" stroke="#333" stroke-width="1.300"/>

<!-- snap bar -->
<rect x="921" y="145" width="16" height="6" fill="url(#dots)"/>
<rect x="913.500" y="155.500" width="31" height="31" rx="3" fill="url(#tog)" stroke="#9c9a97"/>
<path d="M924 166L935 178" stroke="#111" stroke-width="2.200"/><polygon points="928,171 934,174 931,177" fill="#111"/>
<circle cx="924" cy="166" r="2.500" fill="#7a7af5" stroke="#22f" stroke-width="1.300"/><circle cx="935" cy="178" r="2.500" fill="#7dc48b" stroke="#148a32" stroke-width="1.300"/>
<path d="M918 193.500H940M918 375.500H940" stroke="#cfcdcb"/>
<circle cx="923" cy="211" r="2.600" fill="#5555ee" stroke="#22c"/><path d="M926 211.500H937M923 214V224" stroke="#555" stroke-width="1.500" stroke-dasharray="1.500 1"/>
<g stroke="#d5d3d1" stroke-width="1.300" stroke-dasharray="1.500 1" fill="none"><path d="M921 256.500H935V243"/><path d="M921 291H936V276"/><path d="M921 324.500H935V310"/><path d="M921 358.500H935V344"/></g>
<circle cx="935" cy="291" r="2.500" fill="#d5d3d1"/><circle cx="934" cy="315" r="2.500" fill="#d5d3d1"/><circle cx="924" cy="349" r="2.200" fill="#d5d3d1"/>
<rect x="913.500" y="383.500" width="31" height="31" rx="3" fill="url(#tog)" stroke="#9c9a97"/>
<path d="M922 393Q924 403 938 405" fill="none" stroke="#555" stroke-width="1.500"/><path d="M922 395L929 395" stroke="#555"/><circle cx="930" cy="395" r="2.500" fill="#55f" stroke="#22e"/>
<path d="M921 425Q931 425 933 437L928 439Q935 441 937 435" fill="none" stroke="#2e8b2e" stroke-width="1.800"/>
<path d="M921 473L937 461M922 462L936 473" stroke="#d9d8d6" stroke-width="1.400"/><circle cx="929" cy="467" r="2.500" fill="#d0cfcd"/>
<path d="M921 490Q931 492 932 503Q932 507 929 508M937 497Q936 504 932 506" fill="none" stroke="#555" stroke-width="1.300"/><circle cx="928" cy="506" r="2" fill="#2e8b2e" stroke="#1d5"/>
<path d="M921 527Q931 530 932 541Q932 543 930 544M938 534Q938 540 933 543" fill="none" stroke="#555" stroke-width="1.300"/><rect x="926" y="527" width="5" height="5" fill="#2e8b2e" stroke="#246"/>
<path d="M922 576L936 564" stroke="#2e8b2e" stroke-width="1"/><path d="M921 575l2-3 1 3 2-3M931 568l2-3 1 3 2-3" fill="none" stroke="#d22" stroke-width="1.500"/><circle cx="929" cy="570" r="2" fill="#2e8b2e"/>
<path d="M920 608.500H934.500V594" fill="none" stroke="#777" stroke-width="1.300"/><circle cx="926" cy="601" r="2" fill="#5ed47a" stroke="#147a32"/>
<path d="M926 635l4 4-4 4" fill="none" stroke="#111" stroke-width="2"/>

<!-- palette -->
<rect x="6" y="657" width="930" height="18" fill="#888"/>
<rect x="7" y="657" width="16" height="17" fill="#fff"/><path d="M7 657L23 674M23 657L7 674" stroke="#8b2a2a" stroke-width="1.500"/>
<g>
<rect x="23" y="657" width="16" height="17" fill="#000"/><rect x="39" y="657" width="16" height="17" fill="#1a1a1a"/><rect x="55" y="657" width="16" height="17" fill="#333"/><rect x="71" y="657" width="16" height="17" fill="#4d4d4d"/><rect x="87" y="657" width="16" height="17" fill="#666"/><rect x="103" y="657" width="16" height="17" fill="#808080"/><rect x="119" y="657" width="16" height="17" fill="#999"/><rect x="135" y="657" width="16" height="17" fill="#b3b3b3"/><rect x="151" y="657" width="16" height="17" fill="#ccc"/><rect x="167" y="657" width="16" height="17" fill="#e6e6e6"/><rect x="183" y="657" width="16" height="17" fill="#ececec"/><rect x="199" y="657" width="16" height="17" fill="#f2f2f2"/><rect x="215" y="657" width="16" height="17" fill="#f9f9f9"/><rect x="231" y="657" width="16" height="17" fill="#fff"/>
<rect x="247" y="657" width="16" height="17" fill="#800000"/><rect x="263" y="657" width="16" height="17" fill="#f00"/><rect x="279" y="657" width="16" height="17" fill="#808000"/><rect x="295" y="657" width="16" height="17" fill="#ff0"/><rect x="311" y="657" width="16" height="17" fill="#008000"/><rect x="327" y="657" width="16" height="17" fill="#0f0"/><rect x="343" y="657" width="16" height="17" fill="#008080"/><rect x="359" y="657" width="16" height="17" fill="#0ff"/><rect x="375" y="657" width="16" height="17" fill="#000080"/><rect x="391" y="657" width="16" height="17" fill="#00f"/><rect x="407" y="657" width="16" height="17" fill="#800080"/><rect x="423" y="657" width="16" height="17" fill="#f0f"/>
<rect x="439" y="657" width="16" height="17" fill="#2b0000"/><rect x="455" y="657" width="16" height="17" fill="#500"/><rect x="471" y="657" width="16" height="17" fill="#800000"/><rect x="487" y="657" width="16" height="17" fill="#a00"/><rect x="503" y="657" width="16" height="17" fill="#d40000"/><rect x="519" y="657" width="16" height="17" fill="#f00"/><rect x="535" y="657" width="16" height="17" fill="#ff2a2a"/><rect x="551" y="657" width="16" height="17" fill="#f55"/><rect x="567" y="657" width="16" height="17" fill="#ff8080"/><rect x="583" y="657" width="16" height="17" fill="#faa"/><rect x="599" y="657" width="16" height="17" fill="#ffd5d5"/>
<rect x="615" y="657" width="16" height="17" fill="#280b0b"/><rect x="631" y="657" width="16" height="17" fill="#501616"/><rect x="647" y="657" width="16" height="17" fill="#782121"/><rect x="663" y="657" width="16" height="17" fill="#a02c2c"/><rect x="679" y="657" width="16" height="17" fill="#c83737"/><rect x="695" y="657" width="16" height="17" fill="#d35f5f"/><rect x="711" y="657" width="16" height="17" fill="#de8787"/><rect x="727" y="657" width="16" height="17" fill="#e9afaf"/><rect x="743" y="657" width="16" height="17" fill="#f4d7d7"/>
<rect x="759" y="657" width="16" height="17" fill="#241c1c"/><rect x="775" y="657" width="16" height="17" fill="#483737"/><rect x="791" y="657" width="16" height="17" fill="#6c5353"/><rect x="807" y="657" width="16" height="17" fill="#916f6f"/><rect x="823" y="657" width="16" height="17" fill="#ac9393"/><rect x="839" y="657" width="16" height="17" fill="#c8b7b7"/><rect x="855" y="657" width="16" height="17" fill="#e3dbdb"/>
<rect x="871" y="657" width="16" height="17" fill="#2b1100"/><rect x="887" y="657" width="16" height="17" fill="#520"/><rect x="903" y="657" width="16" height="17" fill="#803300"/><rect x="919" y="657" width="16" height="17" fill="#a40"/>
</g>
<rect x="936" y="654" width="12" height="22" fill="#edeceb"/>
<path d="M944 660l-3.500 3.500 3.500 3.500" fill="none" stroke="#111" stroke-width="1.600"/>

<!-- bottom scrollbar -->
<rect x="6" y="675" width="942" height="3" fill="#edeceb"/>
<rect x="6.500" y="678.500" width="929" height="14" fill="#d3d1ce" stroke="#a5a3a0"/>
<rect x="6.500" y="678.500" width="14" height="14" rx="3" fill="#eeedeb" stroke="#b0aeab"/><path d="M15 682.500L12 685.500 15 688.500" fill="none" stroke="#bbb" stroke-width="1.300"/>
<rect x="20.500" y="678.500" width="120" height="14" fill="url(#thh)" stroke="#6d8fbf"/><path d="M76.500 683v5M78.500 683v5M80.500 683v5" stroke="#4f6f9e"/>
<rect x="922.500" y="678.500" width="13" height="14" rx="3" fill="url(#btn)" stroke="#8e8c89"/><path d="M927 682.500L930 685.500 927 688.500" fill="none" stroke="#222" stroke-width="1.400"/>

<!-- status bar -->
<text x="9" y="708" style="font-size:13px" textLength="39">フィル:</text>
<text x="9" y="725" style="font-size:13px" textLength="63">ストローク:</text>
<text x="90" y="725" style="font-size:13px" textLength="23">なし</text>
<rect x="76" y="694" width="51" height="17" fill="#fff"/>
<text x="132" y="717" style="font-size:12px" textLength="12">O:</text>
<rect x="147.500" y="699.500" width="36" height="23" rx="3" fill="#fff" stroke="#8e8c89"/>
<path d="M171.500 699.500h9q3 0 3 3v17q0 3-3 3h-9Z" fill="#ecebe9" stroke="#8e8c89"/><path d="M171.500 711.500h12" stroke="#aaa"/>
<use href="#upf" x="177" y="705"/><use href="#dnc" x="177" y="717"/>
<text x="152" y="717" style="font-size:13px" textLength="17">10</text>
<path d="M187.500 694V728" stroke="#cfcdcb"/>
<use href="#eye" transform="translate(199,711) scale(.8)" opacity=".8"/><use href="#lock" transform="translate(219,713) scale(.75)"/>
<rect x="230.500" y="695.500" width="108" height="31" rx="3" fill="url(#btn)" stroke="#9a9895"/>
<path d="M315.500 699V723" stroke="#c9c7c5"/><use href="#upc" x="326" y="706"/><use href="#dnc" x="326" y="716"/>
<text x="238" y="716" class="b" style="font-size:13px;font-weight:700" textLength="29">·文字</text>
<text x="345" y="717" style="font-size:15px" textLength="136">選択オブジェクトを</text>
<text x="481" y="717" class="b" style="font-size:15px;font-weight:700" textLength="62">拡大縮小</text>
<text x="543" y="717" style="font-size:15px" textLength="58">します。</text>
<text x="605" y="717" class="b" style="font-size:13px" textLength="26">Ctrl</text>
<text x="635" y="717" style="font-size:15px" textLength="116">で縦横比を維持、</text>
<text x="756" y="717" class="b" style="font-size:13px" textLength="37">Shif··</text>
<path d="M793.500 694V728" stroke="#cfcdcb"/>
<text x="797" y="707" style="font-size:11px" textLength="11">X:</text><text x="797" y="724" style="font-size:11px" textLength="11">Y:</text>
<text x="815" y="707" class="m" textLength="36">505.71</text><text x="815" y="724" class="m" textLength="36">205.71</text>
<text x="860" y="716" style="font-size:12px" textLength="11">Z:</text>
<rect x="873.500" y="699.500" width="53" height="23" rx="3" fill="#fff" stroke="#8e8c89"/>
<path d="M915.500 699.500h8q3 0 3 3v17q0 3-3 3h-8Z" fill="#ecebe9" stroke="#8e8c89"/><path d="M915.500 711.500h11" stroke="#aaa"/>
<use href="#upc" x="921" y="705"/><use href="#dnc" x="921" y="717"/>
<text x="884" y="716" style="font-size:12px" textLength="25">35%</text>
<path d="M945 715h1M942 718h1M945 718h1M939 721h1M942 721h1M945 721h1M936 724h1M939 724h1M942 724h1M945 724h1" stroke="#b5b3b0"/>
</svg>
</body></html>
